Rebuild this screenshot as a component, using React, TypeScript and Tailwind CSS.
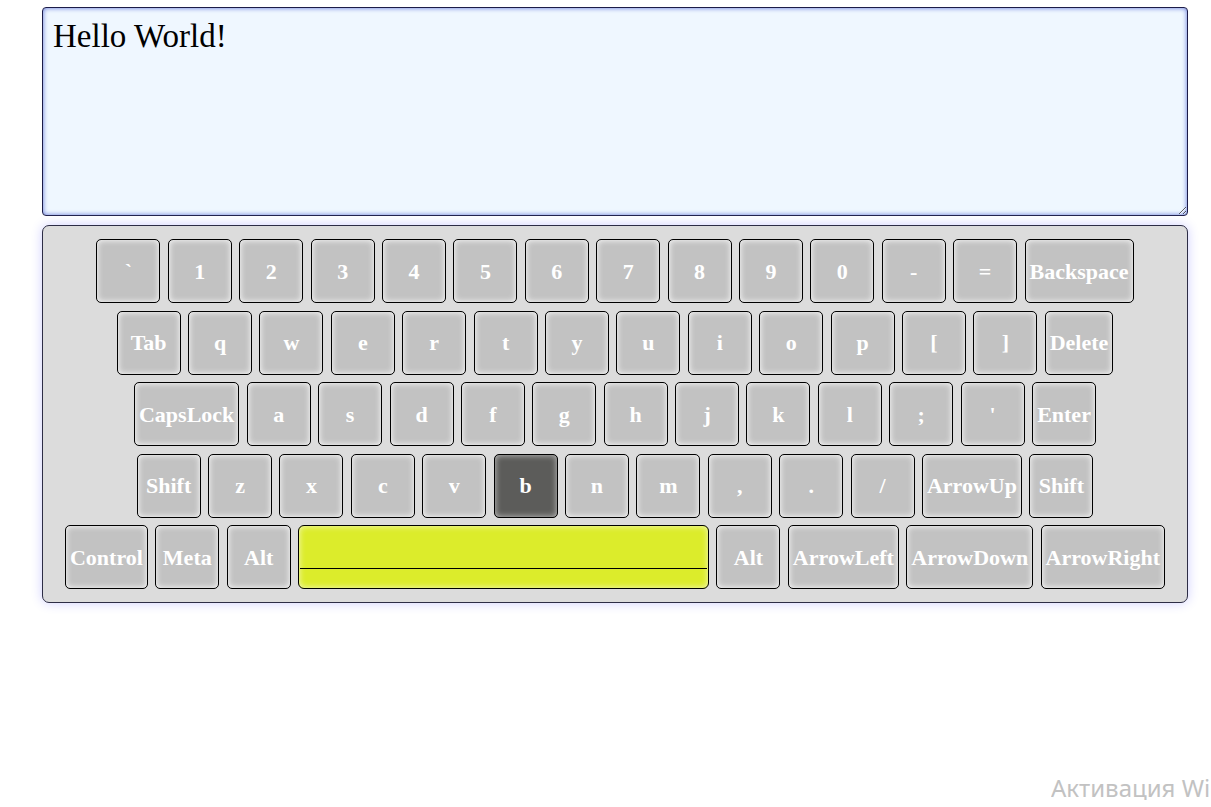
import React from "react";

const ROWS: string[][] = [
  ["`", "1", "2", "3", "4", "5", "6", "7", "8", "9", "0", "-", "=", "Backspace"],
  ["Tab", "q", "w", "e", "r", "t", "y", "u", "i", "o", "p", "[", "]", "Delete"],
  ["CapsLock", "a", "s", "d", "f", "g", "h", "j", "k", "l", ";", "'", "Enter"],
  ["Shift", "z", "x", "c", "v", "b", "n", "m", ",", ".", "/", "ArrowUp", "Shift"],
  ["Control", "Meta", "Alt", " ", "Alt", "ArrowLeft", "ArrowDown", "ArrowRight"],
];

const PRESSED = "b";

function Key({ label }: { label: string }) {
  if (label === " ") {
    return (
      <div className="flex h-[64px] w-[411px] shrink-0 flex-col justify-end rounded-[6px] border border-black bg-[#dcec2b] px-[1px] pb-[19px] shadow-[inset_0_0_6px_#f4f9c8]">
        <div className="h-px w-full bg-black" />
      </div>
    );
  }
  const pressed = label === PRESSED;
  return (
    <div
      className={
        pressed
          ? "flex h-[64px] min-w-[64px] shrink-0 items-center justify-center rounded-[5px] border border-black bg-[#5c5c5a] px-1 text-[22px] font-bold text-white shadow-[inset_0_0_6px_#c8c8c8]"
          : "flex h-[64px] min-w-[64px] shrink-0 items-center justify-center rounded-[5px] border border-black bg-[#c2c2c2] px-1 text-[22px] font-bold text-white shadow-[inset_0_0_6px_#ffffff]"
      }
    >
      {label}
    </div>
  );
}

export default function App() {
  return (
    <div className="relative h-[807px] w-full overflow-hidden bg-white font-['Liberation_Serif',serif]">
      <div className="ml-[42px] flex w-[1146px] flex-col gap-[9px] pt-[7px]">
        <textarea
          defaultValue="Hello World!"
          className="block h-[209px] w-full rounded-[4px] border border-[#1c1c48] bg-[#eff7ff] px-[10px] pt-[4px] pb-[10px] font-['Liberation_Serif',serif] text-[33px] text-black shadow-[inset_0_0_5px_#5d72d8] outline-none"
        />
        <div className="flex flex-col items-center gap-[7.5px] rounded-[7px] border border-[#2d2d45] bg-[#dcdcdc] py-[13px] shadow-[0_0_12px_#d0d0ff]">
          {ROWS.map((row, i) => (
            <div key={i} className="flex gap-[7.4px]">
              {row.map((k, j) => (
                <Key key={j} label={k} />
              ))}
            </div>
          ))}
        </div>
      </div>
      <div className="absolute bottom-[7px] left-[1051px] right-0 overflow-hidden whitespace-nowrap font-['Noto_Sans',sans-serif] text-[24px] leading-none text-[#c2c2c2]">
        Активация Windows
      </div>
    </div>
  );
}
